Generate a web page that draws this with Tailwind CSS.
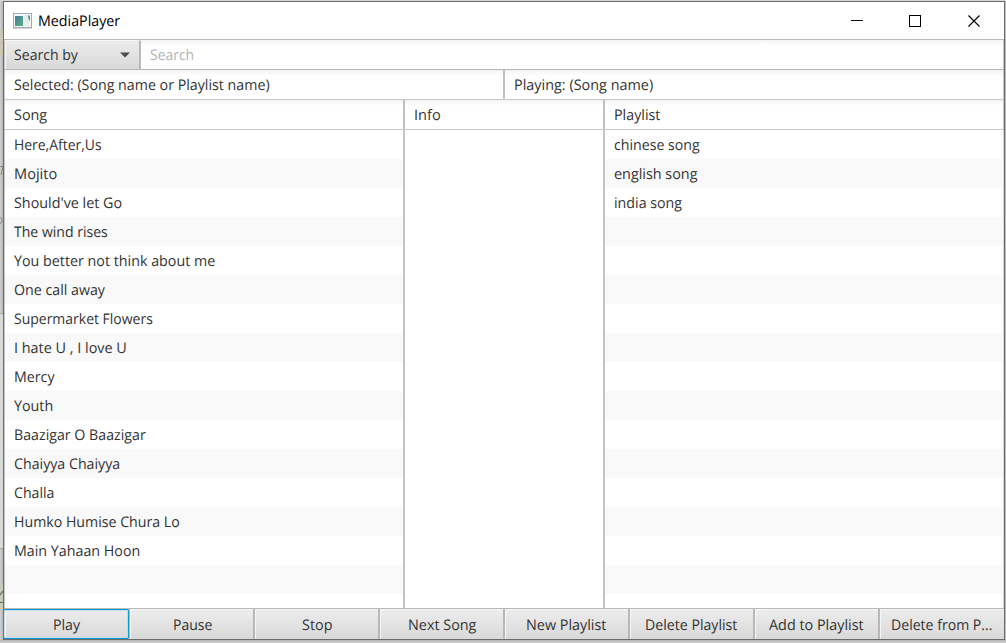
<!DOCTYPE html>
<html lang="en">
<head>
<meta charset="utf-8">
<title>MediaPlayer</title>
<script src="https://cdn.jsdelivr.net/npm/@tailwindcss/browser@4"></script>
</head>
<body class="w-[1006px] h-[643px] overflow-hidden bg-[#cdcdcd] text-[14.6px] leading-[20px] text-[#333333] font-['Open_Sans','Noto_Sans',sans-serif] whitespace-nowrap [text-rendering:geometricPrecision] [&_span]:inline-block [&_span]:origin-left">
<div class="flex w-full h-full flex-col">
  <div class="h-px bg-[#d8d8d8] shrink-0"></div>
  <div class="flex h-[639px] shrink-0">
    <div class="relative w-[3px] shrink-0 overflow-hidden bg-linear-to-r from-[#d2d2d2] to-[#b5b5b5]">
      <div class="absolute left-0 top-[29px] h-[25px] w-full bg-[#c9c7b0]"></div>
      <div class="absolute left-0 top-[312px] h-[235px] w-full bg-[#d9d9d9]"></div>
      <div class="absolute left-0 top-[312px] h-px w-full bg-[#aaaaaa]"></div>
      <div class="absolute left-0 top-[547px] h-px w-full bg-[#aaaaaa]"></div>
      <div class="absolute left-0 top-[582px] h-[27px] w-full bg-[#c4cdb9]"></div>
      <svg class="absolute left-0 top-0" width="3" height="639" fill="none" stroke="#65685a"><path d="M0 165.500H3L1 174M0 216Q4 219 0 223" stroke="#8c877c"/><path d="M0 594L3 590M0 601.500H3" stroke-width="1.200"/></svg>
    </div>
    <main class="flex w-[1002px] shrink-0 flex-col border border-[#6b6b6b] bg-white">
      <header class="flex h-[37px] shrink-0 items-center text-black">
        <svg class="ml-[9px] mt-px" width="19" height="16" viewBox="0 0 19 16"><defs><linearGradient id="g" x2="1" y2="1"><stop stop-color="#4778a0"/><stop offset="1" stop-color="#55b57d"/></linearGradient></defs><rect x=".5" y=".5" width="18" height="14" fill="#f4f5f7" stroke="#a4adb7"/><rect x="2" y="3" width="8" height="10" fill="url(#g)"/><path d="M11 2h5v11h-5z" fill="#e9ebee"/><path d="M15 2.500h2v6q-2-2-2-6" fill="#489c78"/><path d="M0 15.500h19" stroke="#d6d6d6"/></svg>
        <span class="ml-[6px] mt-px scale-x-[0.977]">MediaPlayer</span>
        <svg class="ml-auto mr-[22px]" width="132" height="14" viewBox="0 0 132 14" fill="none" stroke="#000" shape-rendering="crispEdges"><path d="M1 6.500h12M59.500 1.500h11v11h-11z"/><path d="M118.500 1.500l11 11M129.500 1.500l-11 11" shape-rendering="auto" stroke-width="1.100"/></svg>
      </header>
      <div class="flex h-[30px] shrink-0 border-t border-[#b8b8b8]">
        <div class="flex w-[137px] items-center rounded-t-[2px] border-l border-r-2 border-l-[#c4c4c4] border-r-[#b8b8b8] bg-linear-to-b from-[#ececec] to-[#d9d9d9] pl-[9px] shadow-[inset_1px_1px_#f7f7f7]">
          <span class="scale-x-[0.965]">Search by</span>
          <svg class="ml-auto mr-[9px]" width="10" height="6"><path d="M0 .500h10L5 5.500z" fill="#4d4d4d"/></svg>
        </div>
        <div class="flex flex-1 items-center border-r border-[#c8c8c8] bg-linear-to-b from-[#f4f4f4] to-white to-20% pl-[9px] text-[#b4b4b4]"><span class="scale-x-[0.955]">Search</span></div>
      </div>
      <div class="flex h-[30px] shrink-0 border-t border-[#b8b8b8] bg-linear-to-b from-[#f4f4f4] to-white to-20%">
        <div class="flex w-[501px] items-center border-l border-r-2 border-l-[#c8c8c8] border-r-[#c0c0c0] pl-[9px]"><span class="scale-x-[0.975]">Selected: (Song name or Playlist name)</span></div>
        <div class="flex flex-1 items-center border-r border-[#c8c8c8] pl-[9px]"><span class="scale-x-[0.988]">Playing: (Song name)</span></div>
      </div>
      <div class="flex h-[31px] shrink-0 border-y border-[#c8c8c8] bg-linear-to-b from-[#f4f4f4] to-white to-20%">
        <div class="flex w-[401px] items-center border-l border-r-2 border-l-[#c8c8c8] border-r-[#c0c0c0] pl-[9px]"><span class="scale-x-[0.985]">Song</span></div>
        <div class="flex w-[200px] items-center border-r-2 border-[#c0c0c0] pl-[9px]"><span>Info</span></div>
        <div class="flex flex-1 items-center border-r border-[#c8c8c8] pl-[9px]"><span class="scale-x-[0.98]">Playlist</span></div>
      </div>
      <div class="flex h-[478px] shrink-0 overflow-hidden">
        <ul class="w-[401px] border-l border-r-2 border-l-[#c8c8c8] border-r-[#c4c4c4] [&>li]:flex [&>li]:h-[29px] [&>li]:items-center [&>li]:pl-[9px] [&>li:nth-child(even)]:bg-[#f9f9f9]">
          <li><span class="scale-x-[0.955]">Here,After,Us</span></li>
          <li><span>Mojito</span></li>
          <li><span class="scale-x-[0.983]">Should've let Go</span></li>
          <li><span class="scale-x-[0.963]">The wind rises</span></li>
          <li><span class="scale-x-[0.979]">You better not think about me</span></li>
          <li><span class="scale-x-[0.974]">One call away</span></li>
          <li><span class="scale-x-[0.958]">Supermarket Flowers</span></li>
          <li><span class="scale-x-[0.987]">I hate U , I love U</span></li>
          <li><span class="scale-x-[0.975]">Mercy</span></li>
          <li><span class="scale-x-[0.98]">Youth</span></li>
          <li><span class="scale-x-[0.974]">Baazigar O Baazigar</span></li>
          <li><span class="scale-x-[0.973]">Chaiyya Chaiyya</span></li>
          <li><span class="scale-x-[0.97]">Challa</span></li>
          <li><span class="scale-x-[0.971]">Humko Humise Chura Lo</span></li>
          <li><span class="scale-x-[0.978]">Main Yahaan Hoon</span></li>
          <li></li><li></li>
        </ul>
        <div class="w-[200px] border-r-2 border-[#c4c4c4]"></div>
        <ul class="flex-1 border-r border-[#d8d8d8] [&>li]:flex [&>li]:h-[29px] [&>li]:items-center [&>li]:pl-[9px] [&>li:nth-child(even)]:bg-[#f9f9f9]">
          <li><span class="scale-x-[0.971]">chinese song</span></li>
          <li><span class="scale-x-[0.985]">english song</span></li>
          <li><span class="scale-x-[0.976]">india song</span></li>
          <li></li><li></li><li></li><li></li><li></li><li></li><li></li><li></li><li></li><li></li><li></li><li></li><li></li><li></li>
        </ul>
      </div>
      <footer class="grid h-[31px] shrink-0 grid-cols-[repeat(7,125px)_1fr] border-t border-[#b8b8b8] bg-linear-to-b from-[#ededed] to-[#d9d9d9] pl-px [&>div]:flex [&>div]:items-center [&>div]:justify-center [&>div]:border-r-2 [&>div]:border-[#b8b8b8] [&>div]:pt-px [&>div]:shadow-[inset_1px_1px_#f5f5f5] [&_span]:origin-center">
        <div class="relative"><span class="scale-x-[0.97]">Play</span><i class="absolute -left-[2px] -right-px top-0 bottom-0 rounded-[2px] border border-[#0b9bd0] shadow-[inset_0_0_0_1px_#c5dce6]"></i></div>
        <div class="pl-[3px]"><span class="scale-x-[0.96]">Pause</span></div>
        <div class="pl-px"><span class="scale-x-[0.985]">Stop</span></div>
        <div class="pl-[2px]"><span class="scale-x-[0.985]">Next Song</span></div>
        <div class="pl-px"><span class="scale-x-[0.985]">New Playlist</span></div>
        <div class="pl-[2px]"><span class="scale-x-[0.97]">Delete Playlist</span></div>
        <div class="pl-[2px]"><span class="scale-x-[0.985]">Add to Playlist</span></div>
        <div class="border-r-0! pl-[4px]"><span class="scale-x-[0.965]">Delete from P...</span></div>
      </footer>
    </main>
    <div class="flex-1 bg-[#bdbdbd]"></div>
  </div>
  <div class="flex-1 bg-linear-to-b from-[#b5b5b5] to-[#cfcfcf]"></div>
</div>
</body>
</html>
